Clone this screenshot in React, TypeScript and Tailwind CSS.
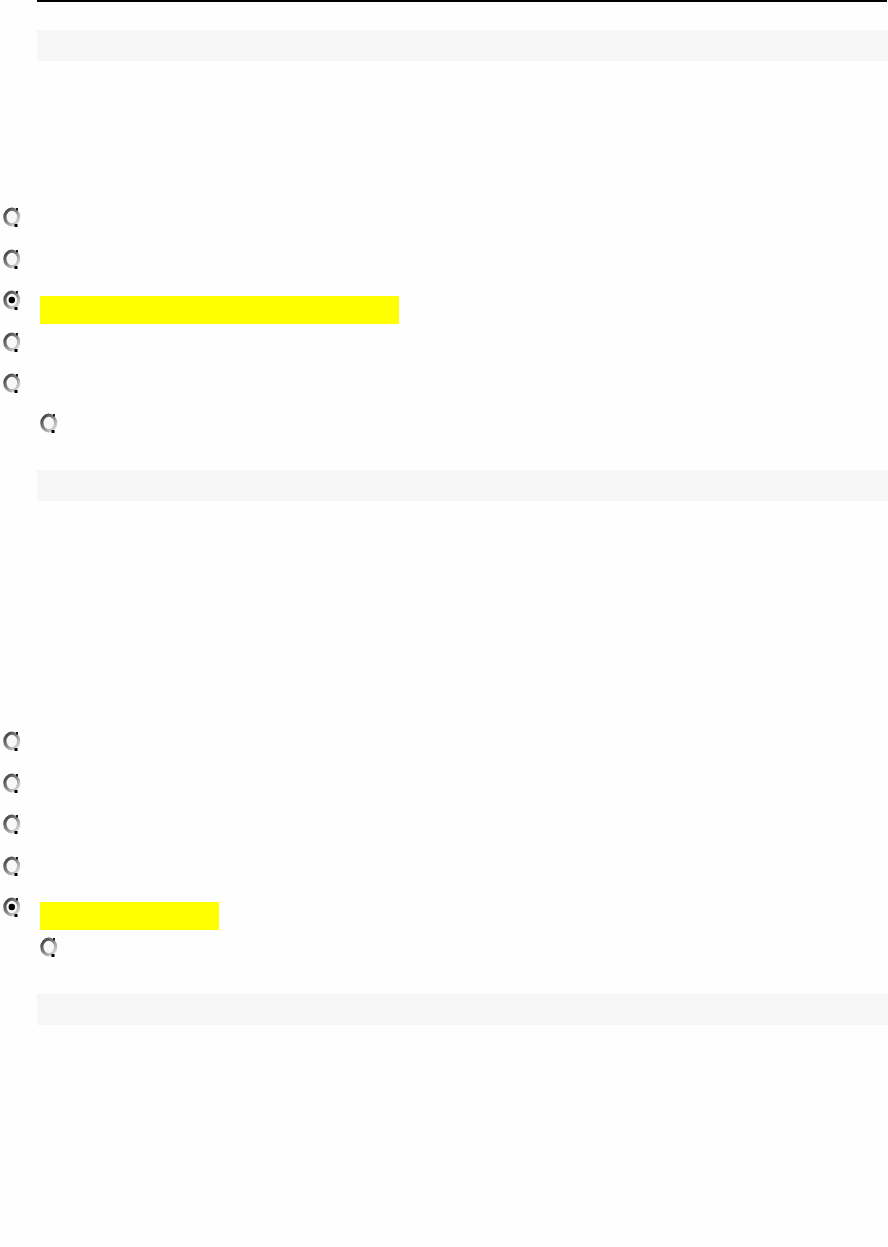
import React from 'react';

interface RadioProps {
    checked?: boolean;
}

const Radio: React.FC<RadioProps> = ({ checked }) => {
    const id = checked ? 'rg-on' : 'rg-off';
    return (
        <svg width="18" height="20" viewBox="0 0 18 20" className="block">
            <defs>
                <linearGradient id={id} x1="0" y1="0.1" x2="0.9" y2="1">
                    <stop offset="0" stopColor="#3f3f3f" />
                    <stop offset="0.5" stopColor="#8c8c8c" />
                    <stop offset="1" stopColor="#e0e0e0" />
                </linearGradient>
            </defs>
            <ellipse cx="8.8" cy="10" rx="6.9" ry="7.8" fill="#f8f8f8" stroke={`url(#${id})`} strokeWidth="3.2" />
            <rect x="13" y="1" width="2" height="2.5" fill="#1a1a1a" />
            <rect x="11.5" y="17" width="3" height="3" fill="#000" />
            {checked && <circle cx="8.8" cy="10" r="3.2" fill="#000" />}
        </svg>
    );
};

const Row: React.FC<{ checked?: boolean; mark?: string }> = ({ checked, mark }) => (
    <div className="relative h-[41.5px] pl-[3px]">
        <Radio checked={checked} />
        {mark && <div className={`absolute left-[40px] top-[6px] h-[28px] bg-[#ffff00] ${mark}`} />}
    </div>
);

const Prompt = () => <div className="ml-[37px] h-[31px] bg-[#f6f6f6]" />;

export default function App() {
    return (
        <div className="min-h-[1247px] bg-[#fefefe] font-['Liberation_Sans',sans-serif] text-black">
            <div className="ml-[37px] mr-px h-[2px] bg-black" />
            <div className="mt-[28px]">
                <Prompt />
            </div>

            <div className="mt-[146px]">
                <Row />
                <Row />
                <Row checked mark="w-[359px]" />
                <Row />
                <div className="h-[40px] pl-[3px]">
                    <Radio />
                </div>
                <div className="h-[57px] pl-[40px]">
                    <Radio />
                </div>
            </div>

            <Prompt />

            <div className="mt-[230px]">
                <Row />
                <Row />
                <Row />
                <Row />
                <div className="relative h-[40px] pl-[3px]">
                    <Radio checked />
                    <div className="absolute left-[40px] top-[5px] h-[28px] w-[179px] bg-[#ffff00]" />
                </div>
                <div className="h-[57px] pl-[40px]">
                    <Radio />
                </div>
            </div>

            <Prompt />
        </div>
    );
}
